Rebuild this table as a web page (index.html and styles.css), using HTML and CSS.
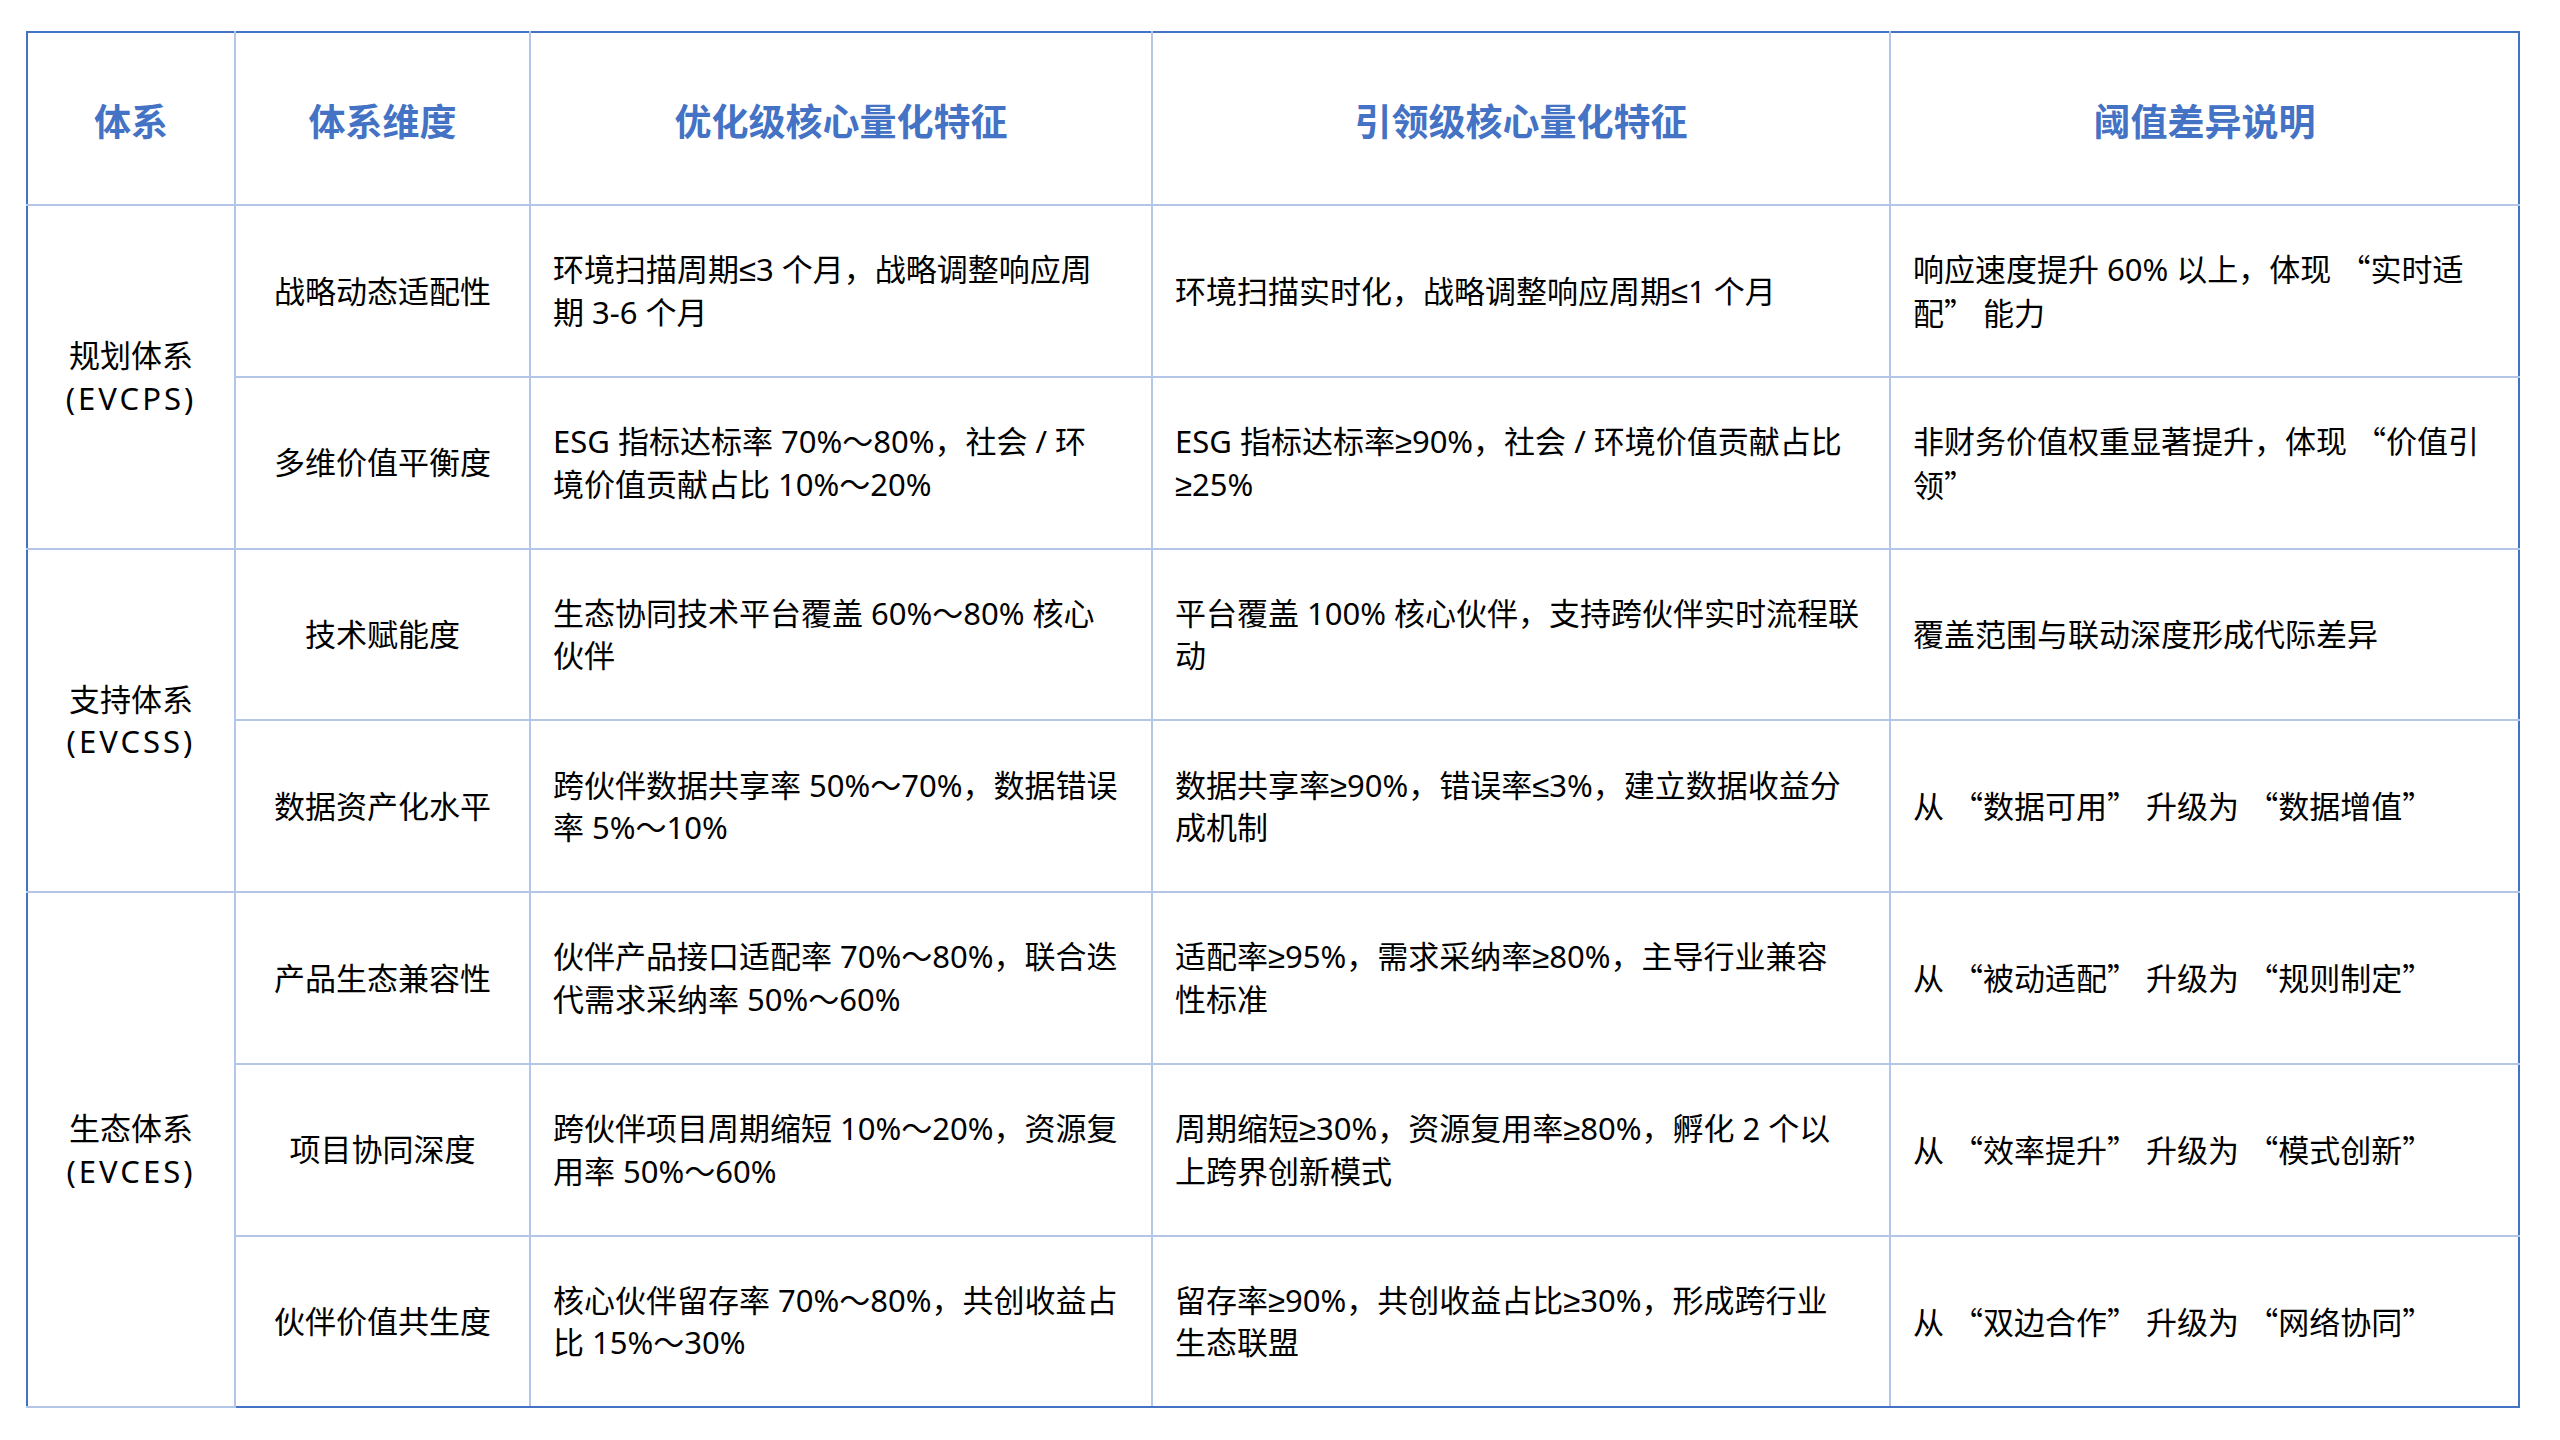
FILE: index.html
```html
<!DOCTYPE html>
<html lang="zh-CN">
<head>
<meta charset="utf-8">
<title>体系阈值对比</title>
<link rel="stylesheet" href="styles.css">
</head>
<body>
<div class="page">
<table class="grid">
  <colgroup>
    <col class="c1"><col class="c2"><col class="c3"><col class="c4"><col class="c5">
  </colgroup>
  <thead>
    <tr class="head">
      <th>体系</th>
      <th>体系维度</th>
      <th>优化级核心量化特征</th>
      <th>引领级核心量化特征</th>
      <th>阈值差异说明</th>
    </tr>
  </thead>
  <tbody>
    <tr>
      <td class="sys" rowspan="2">规划体系<br><span class="code">(EVCPS)</span></td>
      <td class="dim">战略动态适配性</td>
      <td>环境扫描周期≤3 个月，战略调整响应周<br>期 3-6 个月</td>
      <td>环境扫描实时化，战略调整响应周期≤1 个月</td>
      <td>响应速度提升 60% 以上，体现 <span class="cq">“实时适<br>配”</span> 能力</td>
    </tr>
    <tr>
      <td class="dim">多维价值平衡度</td>
      <td>ESG 指标达标率 70%～80%，社会 / 环<br>境价值贡献占比 10%～20%</td>
      <td>ESG 指标达标率≥90%，社会 / 环境价值贡献占比<br>≥25%</td>
      <td>非财务价值权重显著提升，体现 <span class="cq">“价值引<br>领”</span></td>
    </tr>
    <tr>
      <td class="sys" rowspan="2">支持体系<br><span class="code">(EVCSS)</span></td>
      <td class="dim">技术赋能度</td>
      <td>生态协同技术平台覆盖 60%～80% 核心<br>伙伴</td>
      <td>平台覆盖 100% 核心伙伴，支持跨伙伴实时流程联<br>动</td>
      <td>覆盖范围与联动深度形成代际差异</td>
    </tr>
    <tr>
      <td class="dim">数据资产化水平</td>
      <td>跨伙伴数据共享率 50%～70%，数据错误<br>率 5%～10%</td>
      <td>数据共享率≥90%，错误率≤3%，建立数据收益分<br>成机制</td>
      <td>从 <span class="cq">“数据可用”</span> 升级为 <span class="cq">“数据增值”</span></td>
    </tr>
    <tr>
      <td class="sys" rowspan="3">生态体系<br><span class="code">(EVCES)</span></td>
      <td class="dim">产品生态兼容性</td>
      <td>伙伴产品接口适配率 70%～80%，联合迭<br>代需求采纳率 50%～60%</td>
      <td>适配率≥95%，需求采纳率≥80%，主导行业兼容<br>性标准</td>
      <td>从 <span class="cq">“被动适配”</span> 升级为 <span class="cq">“规则制定”</span></td>
    </tr>
    <tr>
      <td class="dim">项目协同深度</td>
      <td>跨伙伴项目周期缩短 10%～20%，资源复<br>用率 50%～60%</td>
      <td>周期缩短≥30%，资源复用率≥80%，孵化 2 个以<br>上跨界创新模式</td>
      <td>从 <span class="cq">“效率提升”</span> 升级为 <span class="cq">“模式创新”</span></td>
    </tr>
    <tr>
      <td class="dim">伙伴价值共生度</td>
      <td>核心伙伴留存率 70%～80%，共创收益占<br>比 15%～30%</td>
      <td>留存率≥90%，共创收益占比≥30%，形成跨行业<br>生态联盟</td>
      <td>从 <span class="cq">“双边合作”</span> 升级为 <span class="cq">“网络协同”</span></td>
    </tr>
  </tbody>
</table>
</div>
</body>
</html>
```
FILE: styles.css
```css
html, body {
  margin: 0;
  padding: 0;
  background: #ffffff;
}

.page {
  padding: 31px 0 0 26px;
}

.grid {
  border-collapse: collapse;
  table-layout: fixed;
  width: 2492px;
  border: 2px solid #4472c4;
  font-family: "Noto Sans", "Liberation Sans", "Noto Sans CJK SC", sans-serif;
  font-size: 31px;
  line-height: 42.5px;
  color: #000000;
}

.c1 { width: 208px; }
.c2 { width: 295px; }
.c3 { width: 622px; }
.c4 { width: 738px; }
.c5 { width: 629px; }

.grid th,
.grid td {
  border: 2px solid #b4c6e7;
  padding: 0 22px;
  vertical-align: middle;
  text-align: left;
}

.grid tr:first-child th { border-top-color: #4472c4; }
.grid th:first-child,
.grid td.sys { border-left-color: #4472c4; }
.grid th:last-child,
.grid td:last-child { border-right-color: #4472c4; }
.grid tbody tr:last-child td { border-bottom-color: #4472c4; }

.head {
  height: 173px;
}

.grid tbody tr {
  height: 171.75px;
}

.grid th {
  font-family: "Noto Sans CJK SC", sans-serif;
  font-weight: 700;
  font-size: 37px;
  color: #4472c4;
  text-align: center;
  padding-top: 4px;
}

.grid td.sys,
.grid td.dim {
  text-align: center;
  padding: 0 8px;
}

.code {
  letter-spacing: 3px;
}

.cq {
  font-family: "Noto Sans CJK SC", sans-serif;
  font-feature-settings: "fwid" 1;
}
```
